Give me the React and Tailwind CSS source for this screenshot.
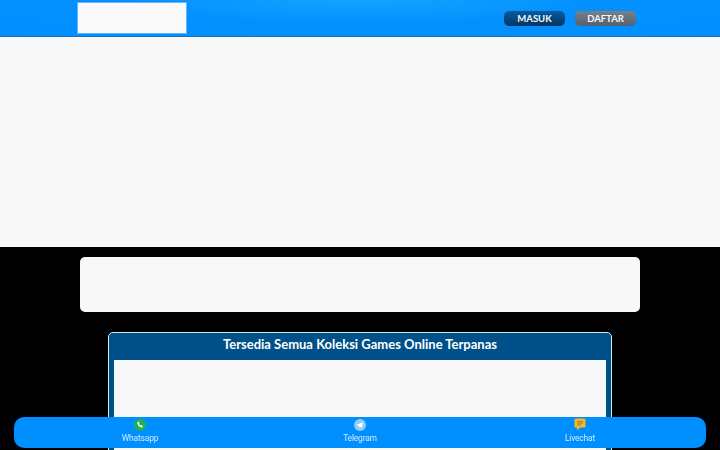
import React from 'react';

const font = { fontFamily: 'Lato, "Open Sans", sans-serif' };

function Contact({ label, children }) {
    return (
        <a className="flex flex-col items-center w-[100px]">
            <span className="h-[13px] flex items-center justify-center">{children}</span>
            <span className="mt-[2px] text-[8.500px] leading-[10px] tracking-[-0.2px] text-[#d3eaff] font-['Roboto',sans-serif]">{label}</span>
        </a>
    );
}

export default function App() {
    return (
        <div className="h-[450px] overflow-hidden bg-black" style={font}>
            <header className="h-[37px] border-b border-[#1a6fb8] bg-[radial-gradient(ellipse_at_50%_0%,#14a3ff_0%,#0491ff_45%,#008fff_100%)] flex items-center justify-between pl-[77px] pr-[84px]">
                <div className="w-[110px] h-[32px] mb-[1px] bg-[#f9f9f9] border border-[#62b6ff]" />
                <div className="flex gap-[10px]">
                    <button className="w-[61px] h-[15px] rounded-[5px] bg-gradient-to-b from-[#0a5ca3] to-[#03345f] text-[#f2f8ff] text-[9.500px] leading-[15px] font-bold">MASUK</button>
                    <button className="w-[61px] h-[15px] rounded-[5px] bg-gradient-to-b from-[#76818c] to-[#56616d] text-[#f2f8ff] text-[9.500px] leading-[15px] font-bold">DAFTAR</button>
                </div>
            </header>

            <div className="h-[210px] bg-[#f8f8f8]" />

            <div className="pt-[10px] flex flex-col items-center">
                <div className="w-[560px] h-[55px] rounded-[5px] bg-[#f8f8f8]" />

                <section className="mt-[20px] w-[504px] h-[140px] rounded-t-[5px] border border-[#d6e6f2] bg-[#00508a] px-[5px]">
                    <h2 className="h-[27px] text-center text-white text-[13px] leading-[23px] font-bold">
                        Tersedia Semua Koleksi Games Online Terpanas
                    </h2>
                    <div className="h-[110px] bg-[#f8f8f8]" />
                </section>
            </div>

            <nav className="fixed left-[14px] right-[14px] bottom-[2px] h-[31px] rounded-[10px] bg-[#008fff] flex items-start justify-between pt-[1px] px-[76px]">
                <Contact label="Whatsapp">
                    <svg width="12" height="12" viewBox="0 0 12 12">
                        <circle cx="6" cy="6" r="6" fill="#22b24c" />
                        <path d="M3.700 2.900l1-.4.8 1.600-.6.6c.3.8.9 1.500 1.800 1.900l.6-.6 1.600.9-.4 1c-.3.4-.8.6-1.300.5C5.300 7.900 3.900 6.400 3.300 4.300c-.1-.5.1-1 .4-1.400z" fill="#fff" />
                    </svg>
                </Contact>
                <Contact label="Telegram">
                    <svg width="12" height="12" viewBox="0 0 12 12">
                        <circle cx="6" cy="6" r="6" fill="#8fcdf2" />
                        <path d="M2.300 6l6.700-2.800-1 5.800-2-1.500-1 1-.3-1.800z" fill="#fff" />
                    </svg>
                </Contact>
                <Contact label="Livechat">
                    <svg width="12" height="13" viewBox="0 0 12 13">
                        <path d="M2 .5h8a1.500 1.500 0 0 1 1.500 1.500v6A1.500 1.500 0 0 1 10 9.500H6l-3 3V9.500H2A1.500 1.500 0 0 1 .5 8V2A1.500 1.500 0 0 1 2 .5z" fill="#f5b92e" />
                        <path d="M3 3.500h6M3 5.200h6M3 6.900h4" stroke="#9a7414" strokeWidth=".8" />
                    </svg>
                </Contact>
            </nav>
        </div>
    );
}
